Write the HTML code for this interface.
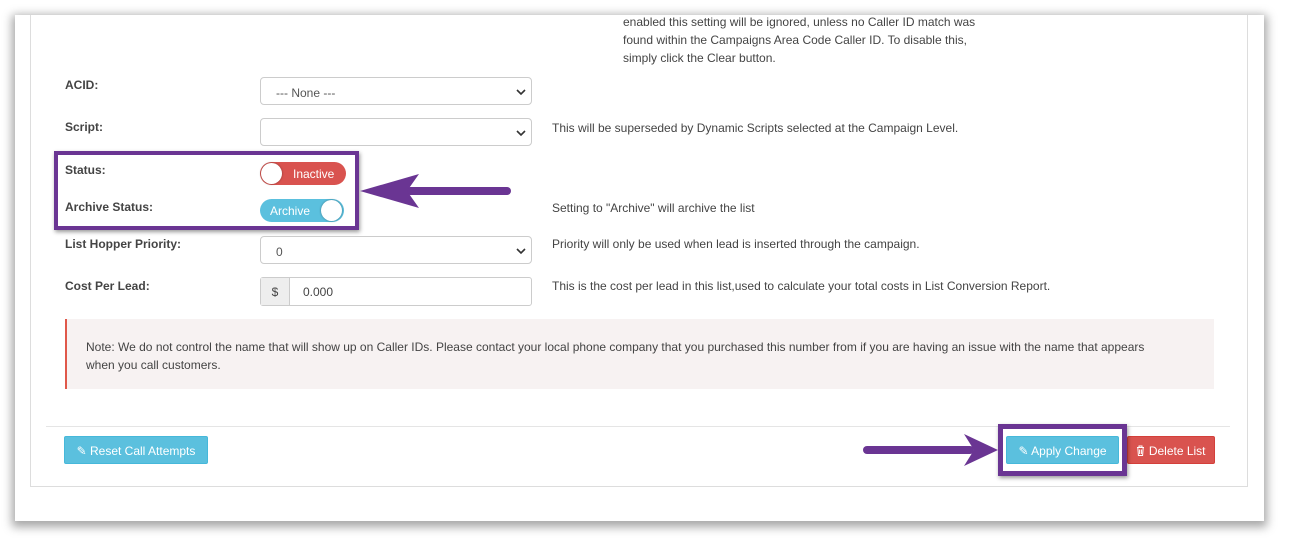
<!DOCTYPE html>
<html><head><meta charset="utf-8"><style>
*{box-sizing:border-box;margin:0;padding:0}
body{width:1289px;height:547px;background:#fff;position:relative;overflow:hidden;font-family:"Liberation Sans",sans-serif;color:#444;font-size:12px}
.win{position:absolute;left:15px;top:15px;width:1249px;height:506px;background:#fff;box-shadow:0 3px 9px 3px rgba(0,0,0,.35)}
.panel{position:absolute;left:30px;top:15px;width:1218px;height:472px;border:1px solid #ddd;border-top:none;background:#fff}
.a{position:absolute}
.lbl{position:absolute;left:65px;font-weight:bold;font-size:12px;color:#444}
.sel{position:absolute;left:260px;width:272px;height:28px;border:1px solid #ccc;border-radius:4px;background:#fff;font-size:12px;padding:8px 0 0 15px;color:#555}
.sel svg{position:absolute;right:5px;top:10px}
.help{position:absolute;left:552px;font-size:12px;color:#444}
.tog{position:absolute;left:260px;width:86px;height:23px;border-radius:12px;color:#fff;font-size:12px}
.knob{position:absolute;top:1px;width:21px;height:21px;border-radius:50%;background:#fff;box-shadow:0 0 2px rgba(0,0,0,.4)}
.btn{position:absolute;height:28px;color:#fff;font-size:12px;border-radius:2px;padding-top:7px;text-align:center}
</style></head><body>
<div class="win"></div>
<div class="panel"></div>
<div class="a" style="left:623px;top:13px;line-height:18px;font-size:12px;width:380px">enabled this setting will be ignored, unless no Caller ID match was found within the Campaigns Area Code Caller ID. To disable this, simply click the Clear button.</div>

<div class="lbl" style="top:78px">ACID:</div>
<div class="sel" style="top:77px">--- None ---<svg width="10" height="8" viewBox="0 0 10 8"><path d="M1 2l4 4 4-4" stroke="#333" stroke-width="1.6" fill="none"/></svg></div>

<div class="lbl" style="top:120px">Script:</div>
<div class="sel" style="top:118px"><svg width="10" height="8" viewBox="0 0 10 8"><path d="M1 2l4 4 4-4" stroke="#333" stroke-width="1.6" fill="none"/></svg></div>
<div class="help" style="top:121px">This will be superseded by Dynamic Scripts selected at the Campaign Level.</div>

<div class="lbl" style="top:163px">Status:</div>
<div class="tog" style="top:162px;background:#d9534f"><div class="knob" style="left:1px"></div><span class="a" style="left:33px;top:5px">Inactive</span></div>

<div class="lbl" style="top:200px">Archive Status:</div>
<div class="tog" style="top:199px;background:#5bc0de;width:84px"><div class="knob" style="left:61px"></div><span class="a" style="left:10px;top:5px">Archive</span></div>
<div class="help" style="top:201px">Setting to "Archive" will archive the list</div>

<div class="a" style="left:54px;top:151px;width:305px;height:79px;border:4px solid #6a3593;box-shadow:1px 2px 4px rgba(0,0,0,.4)"></div>
<svg class="a" style="left:355px;top:170px" width="165" height="42" viewBox="0 0 165 42">
<path d="M55 21H152" stroke="#6a3593" stroke-width="8" stroke-linecap="round"/>
<path d="M5 21L64 4L52 21L64 38Z" fill="#6a3593"/></svg>

<div class="lbl" style="top:237px">List Hopper Priority:</div>
<div class="sel" style="top:236px">0<svg width="10" height="8" viewBox="0 0 10 8"><path d="M1 2l4 4 4-4" stroke="#333" stroke-width="1.6" fill="none"/></svg></div>
<div class="help" style="top:237px">Priority will only be used when lead is inserted through the campaign.</div>

<div class="lbl" style="top:279px">Cost Per Lead:</div>
<div class="a" style="left:260px;top:277px;width:272px;height:29px;border:1px solid #ccc;border-radius:3px;background:#fff">
<div class="a" style="left:0;top:0;width:29px;height:27px;background:#eee;border-right:1px solid #ccc;text-align:center;padding-top:7px">$</div>
<div class="a" style="left:42px;top:7px">0.000</div></div>
<div class="help" style="top:279px">This is the cost per lead in this list,used to calculate your total costs in List Conversion Report.</div>

<div class="a" style="left:65px;top:319px;width:1149px;height:70px;background:#f7f2f2;border-left:2px solid #e0584a;padding:19px 60px 0 19px;line-height:18px;font-size:12px;color:#444">Note: We do not control the name that will show up on Caller IDs. Please contact your local phone company that you purchased this number from if you are having an issue with the name that appears when you call customers.</div>

<div class="a" style="left:46px;top:426px;width:1184px;height:1px;background:#e5e5e5"></div>

<div class="btn" style="left:64px;top:436px;width:144px;background:#5bc0de;border:1px solid #46b8da">&#9998; Reset Call Attempts</div>
<div class="btn" style="left:1006px;top:436px;width:113px;background:#5bc0de;border:1px solid #46b8da">&#9998; Apply Change</div>
<div class="btn" style="left:1127px;top:436px;width:88px;background:#d9534f;border:1px solid #d43f3a"><svg width="9" height="11" viewBox="0 0 9 11" style="vertical-align:-1px"><path d="M1 2.5h7M3 2.5V1h3v1.5M1.8 2.5l.6 8h4.2l.6-8M3.6 4.5v4.5M5.4 4.5v4.5" stroke="#fff" stroke-width="1" fill="none"/></svg> Delete List</div>
<div class="a" style="left:998px;top:424px;width:129px;height:52px;border:5px solid #6a3593;box-shadow:1px 2px 4px rgba(0,0,0,.4)"></div>
<svg class="a" style="left:860px;top:432px" width="140" height="36" viewBox="0 0 140 36">
<path d="M7 18H110" stroke="#6a3593" stroke-width="8" stroke-linecap="round"/>
<path d="M138 18L104 2L114 18L104 34Z" fill="#6a3593"/></svg>
</body></html>
